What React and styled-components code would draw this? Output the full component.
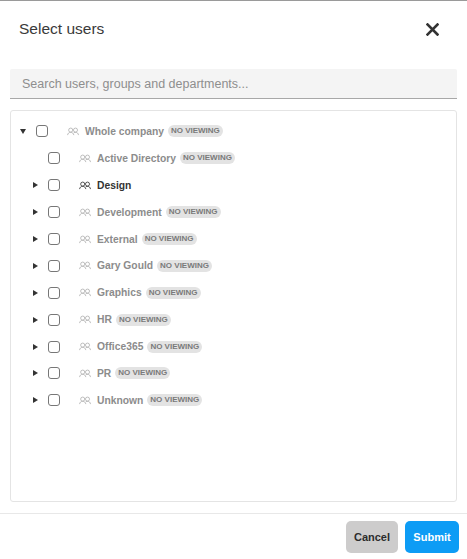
import React from "react";
import styled, { createGlobalStyle } from "styled-components";

const groups = [
  { name: "Active Directory", leaf: true },
  { name: "Design", active: true },
  { name: "Development" },
  { name: "External" },
  { name: "Gary Gould" },
  { name: "Graphics" },
  { name: "HR" },
  { name: "Office365" },
  { name: "PR" },
  { name: "Unknown" },
];

function GroupIcon() {
  return (
    <svg width="12" height="9" viewBox="0 0 13 9" fill="none" stroke="currentColor" strokeWidth="0.9">
      <circle cx="4" cy="3" r="2.2" />
      <circle cx="9.2" cy="3" r="2.2" />
      <path d="M0.6 8.4C1 6.4 2.2 5.4 4 5.4S7 6.4 7.4 8.4" />
      <path d="M7.4 5.6C7.9 5.4 8.5 5.4 9.2 5.4C11 5.4 12.1 6.4 12.5 8.4" />
    </svg>
  );
}

function TreeRow({ name, level, open, leaf, active }) {
  return (
    <Row $level={level}>
      <Caret $open={open} $hidden={leaf} />
      <Check />
      <Group $active={active}>
        <GroupIcon />
      </Group>
      <Name $active={active}>{name}</Name>
      {!active && <Badge>NO VIEWING</Badge>}
    </Row>
  );
}

export default function App() {
  return (
    <>
      <GlobalStyle />
      <Dialog>
        <Header>
          <Title>Select users</Title>
          <Close aria-label="Close">
            <svg width="13" height="13" viewBox="0 0 13 13" stroke="#333" strokeWidth="2.6" strokeLinecap="square">
              <path d="M1.5 1.5L11.5 11.5M11.5 1.5L1.5 11.5" />
            </svg>
          </Close>
        </Header>
        <Search placeholder="Search users, groups and departments..." />
        <Tree>
          <TreeRow name="Whole company" level={0} open />
          {groups.map((g) => (
            <TreeRow key={g.name} level={1} {...g} />
          ))}
        </Tree>
        <Footer>
          <Button>Cancel</Button>
          <Button $primary>Submit</Button>
        </Footer>
      </Dialog>
    </>
  );
}

const GlobalStyle = createGlobalStyle`
  html, body {
    margin: 0;
    padding: 0;
    background: #fff;
  }
  body {
    font-family: "Liberation Sans", Arial, sans-serif;
  }
`;

const Dialog = styled.div`
  width: 467px;
  height: 559px;
  box-sizing: border-box;
  border-top: 1px solid #9a9a9a;
  background: #fff;
  display: flex;
  flex-direction: column;
`;

const Header = styled.div`
  display: flex;
  justify-content: space-between;
  align-items: center;
  height: 56px;
  padding: 0 28px 0 19px;
  flex: none;
`;

const Title = styled.h2`
  margin: 0;
  font-size: 15.5px;
  font-weight: 400;
  color: #3a3a3a;
`;

const Close = styled.button`
  display: flex;
  padding: 0;
  border: 0;
  background: none;
`;

const Search = styled.input`
  flex: none;
  height: 29px;
  margin: 12px 10px 0;
  padding: 0 12px;
  box-sizing: content-box;
  width: 423px;
  border: 0;
  border-bottom: 1px solid #a8a8a8;
  border-radius: 2px 2px 0 0;
  background: #f4f4f4;
  font: 12.5px "Liberation Sans", Arial, sans-serif;
  &::placeholder {
    color: #8e8e8e;
    opacity: 1;
  }
`;

const Tree = styled.div`
  flex: none;
  height: 392px;
  margin: 11px 10px 0;
  padding: 7px 0 0;
  border: 1px solid #e4e4e4;
  border-radius: 3px;
  box-sizing: border-box;
`;

const Row = styled.div`
  display: flex;
  align-items: center;
  height: 26.9px;
  padding-left: ${(p) => 9 + p.$level * 12}px;
`;

const Caret = styled.span`
  width: 0;
  height: 0;
  flex: none;
  margin-right: 10px;
  margin-left: ${(p) => (p.$open ? 0 : 1)}px;
  visibility: ${(p) => (p.$hidden ? "hidden" : "visible")};
  border-style: solid;
  border-color: transparent;
  ${(p) =>
    p.$open
      ? "border-width: 5px 3.5px 0; border-top-color: #333;"
      : "border-width: 3.5px 0 3.5px 5px; border-left-color: #333;"}
`;

const Check = styled.span`
  flex: none;
  width: 10px;
  height: 10px;
  border: 1px solid #777;
  border-radius: 3px;
  background: #fff;
  margin-right: 19px;
`;

const Group = styled.span`
  display: flex;
  flex: none;
  margin-right: 6px;
  color: ${(p) => (p.$active ? "#333" : "#b0b0b0")};
`;

const Name = styled.span`
  font-size: 10.3px;
  font-weight: 700;
  color: ${(p) => (p.$active ? "#333" : "#8c8c8c")};
`;

const Badge = styled.span`
  margin-left: 4px;
  padding: 0 3px;
  height: 12px;
  line-height: 12px;
  border-radius: 6px;
  background: #e3e3e3;
  color: #7a7a7a;
  font-size: 8px;
  font-weight: 700;
`;

const Footer = styled.div`
  flex: 1;
  margin-top: 11px;
  border-top: 1px solid #e8e8e8;
  display: flex;
  justify-content: flex-end;
  align-items: flex-start;
  gap: 7px;
  padding: 7px 8px 0 0;
`;

const Button = styled.button`
  width: ${(p) => (p.$primary ? 54 : 52)}px;
  height: 32px;
  padding: 0;
  border: 0;
  border-radius: 5px;
  background: ${(p) => (p.$primary ? "#0d9cf5" : "#cdcccc")};
  color: ${(p) => (p.$primary ? "#fff" : "#2c2c2c")};
  font: 700 11px "Liberation Sans", Arial, sans-serif;
`;
